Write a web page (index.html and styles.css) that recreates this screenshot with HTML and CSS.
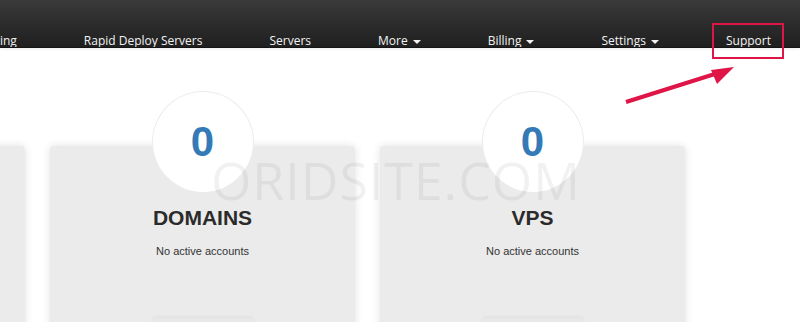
FILE: index.html
```html
<!DOCTYPE html>
<html lang="en">
<head>
    <meta charset="UTF-8">
    <meta name="viewport" content="width=device-width, initial-scale=1.0">
    <title>Client Area</title>
    <link rel="stylesheet" href="styles.css">
</head>
<body>
    <div class="topbar">
        <ul class="nav">
            <li>Web Hosting</li>
            <li>Rapid Deploy Servers</li>
            <li>Servers</li>
            <li class="dropdown">More</li>
            <li class="dropdown">Billing</li>
            <li class="dropdown">Settings</li>
            <li>Support</li>
        </ul>
    </div>

    <div class="stats">
        <div class="card">
            <div class="count"></div>
            <div class="card-btn"></div>
        </div>
        <div class="card">
            <div class="count">0</div>
            <h3>DOMAINS</h3>
            <p>No active accounts</p>
            <div class="card-btn"></div>
        </div>
        <div class="card">
            <div class="count">0</div>
            <h3>VPS</h3>
            <p>No active accounts</p>
            <div class="card-btn"></div>
        </div>
    </div>

    <!-- annotation layer -->
    <div class="watermark">ORIDSITE.COM</div>
    <div class="highlight"></div>
    <svg class="arrow" width="800" height="322" viewBox="0 0 800 322">
        <line x1="626" y1="102" x2="718" y2="73" stroke="#df1547" stroke-width="4"/>
        <polygon points="734,67 711,70 717,84" fill="#df1547"/>
    </svg>
</body>
</html>
```

FILE: styles.css
```css
body {
    margin: 0;
    background: #fff;
    font-family: "Liberation Sans", Arial, sans-serif;
    color: #333;
    overflow: hidden;
    height: 322px;
    position: relative;
}
.topbar {
    height: 48px;
    background: linear-gradient(to bottom, #3a3a3a, #1f1f1f);
    border-bottom: 1px solid #151515;
    box-sizing: border-box;
    overflow: hidden;
    box-shadow: 0 1px 3px rgba(0,0,0,0.08);
}
.nav {
    list-style: none;
    margin: 0;
    padding: 0 29px 0 0;
    display: flex;
    justify-content: flex-end;
    gap: 67px;
    white-space: nowrap;
}
.nav li {
    font-family: "Open Sans", sans-serif;
    font-size: 12px;
    line-height: 18px;
    padding-top: 32px;
    color: #f2f2f2;
}
.nav .dropdown::after {
    content: "";
    display: inline-block;
    margin-left: 5px;
    vertical-align: middle;
    border-top: 4px solid #f2f2f2;
    border-left: 4px solid transparent;
    border-right: 4px solid transparent;
}
.stats {
    display: flex;
    gap: 25px;
    margin-left: -280px;
    padding-top: 44px;
}
.card {
    flex: none;
    width: 305px;
    height: 230px;
    margin-top: 54px;
    background: #ebebeb;
    border-radius: 4px;
    box-shadow: 0 0 8px rgba(0,0,0,0.12);
    text-align: center;
}
.count {
    width: 100px;
    height: 100px;
    margin: -54px auto 0;
    border-radius: 50%;
    background: #fff;
    box-shadow: 0 0 0 1px #ececec;
    display: flex;
    align-items: center;
    justify-content: center;
    font-size: 42px;
    font-weight: bold;
    color: #337ab7;
}
.card h3 {
    margin: 14px 0 0;
    font-size: 21px;
    line-height: 24px;
    color: #2b2b2b;
}
.card p {
    margin: 13px 0 0;
    font-size: 11px;
    line-height: 16px;
    color: #333;
}
.card-btn {
    width: 100px;
    height: 30px;
    margin: 59px auto 0;
    background: #e8e8e8;
    box-shadow: 0 -1px 4px rgba(0,0,0,0.06);
    border-radius: 3px;
}
.watermark {
    position: absolute;
    left: 211px;
    top: 149px;
    font-family: "Open Sans", sans-serif;
    font-size: 52px;
    line-height: 62px;
    letter-spacing: 0.9px;
    color: rgba(0,0,0,0.055);
    pointer-events: none;
}
.highlight {
    position: absolute;
    left: 712px;
    top: 23px;
    width: 68px;
    height: 32px;
    border: 2px solid #df1547;
}
.arrow {
    position: absolute;
    left: 0;
    top: 0;
    pointer-events: none;
}
```
